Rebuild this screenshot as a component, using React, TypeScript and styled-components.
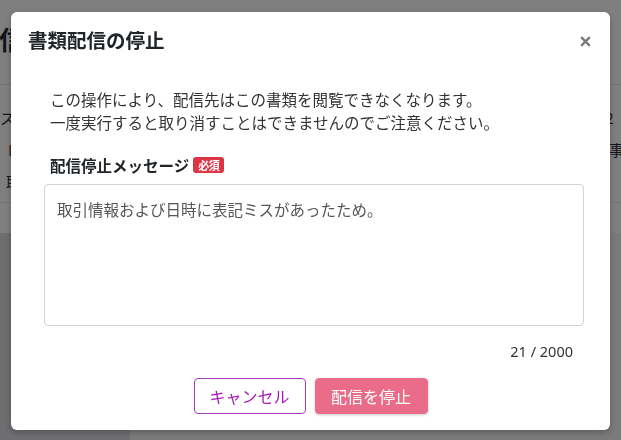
import React from "react";
import styled, { createGlobalStyle } from "styled-components";

const Global = createGlobalStyle`
  html, body { margin: 0; padding: 0; overflow: hidden; }
  body {
    width: 621px;
    height: 440px;
    font-family: "Noto Sans", "Noto Sans CJK JP", sans-serif;
    color: #212529;
    background: #ffffff;
  }
  * { box-sizing: border-box; }
`;

/* ---------- background page ---------- */
const Page = styled.div`
  width: 621px;
  height: 440px;
  display: flex;
  flex-direction: column;
  overflow: hidden;
  background: #fff;
`;

const PageHeader = styled.header`
  height: 85px;
  flex: none;
  display: flex;
  align-items: center;
  border-bottom: 1px solid #e6e6e6;
  padding-bottom: 8px;
`;

const PageTitle = styled.h1`
  margin: 0 0 0 -1px;
  font-size: 26px;
  font-weight: 700;
  color: #1f2a36;
  font-family: "Noto Sans CJK JP", sans-serif;
`;

const Table = styled.div`
  height: 118px;
  flex: none;
  display: flex;
  flex-direction: column;
  padding-top: 16px;
  border-bottom: 1px solid #e6e6e6;
`;

const TableRow = styled.div`
  height: 32px;
  display: grid;
  grid-template-columns: 597px 24px;
  align-items: center;
  font-size: 15px;
  font-family: "Noto Sans CJK JP", sans-serif;
  white-space: nowrap;
  overflow: hidden;
`;

const Cell = styled.span<{ $indent?: number; $tone?: string }>`
  padding-left: ${(p) => p.$indent ?? 0}px;
  color: ${(p) => p.$tone ?? "#1f2a36"};
  overflow: hidden;
`;

const WhiteBand = styled.div`
  height: 30px;
  flex: none;
`;

const Lower = styled.div`
  flex: 1;
  display: flex;
`;

const SideArea = styled.div`
  width: 130px;
  background: #dcdce2;
`;

const MainArea = styled.div`
  flex: 1;
  background: #f4f4f6;
`;

/* ---------- modal ---------- */
const Overlay = styled.div`
  position: fixed;
  inset: 0;
  background: rgba(0, 0, 0, 0.5);
  display: flex;
  justify-content: center;
  align-items: flex-start;
`;

const Modal = styled.div`
  margin-top: 12px;
  width: 599px;
  height: 418px;
  background: #fff;
  border-radius: 6px;
  box-shadow: 0 2px 6px rgba(0, 0, 0, 0.25);
  display: flex;
  flex-direction: column;
`;

const ModalHeader = styled.div`
  display: flex;
  align-items: center;
  justify-content: space-between;
  padding: 14px 19px 0 17px;
`;

const Title = styled.h2`
  margin: 0;
  font-size: 19.5px;
  line-height: 28px;
  font-weight: 700;
  color: #212529;
  font-family: "Noto Sans CJK JP", sans-serif;
`;

const CloseButton = styled.button`
  border: 0;
  background: none;
  padding: 0;
  width: 11px;
  height: 11px;
  margin-top: 3px;
  display: flex;
  cursor: pointer;
`;

const ModalBody = styled.div`
  padding: 34px 27px 0 33px;
  display: flex;
  flex-direction: column;
`;

const Description = styled.p`
  margin: 0;
  padding-left: 6px;
  font-size: 15.5px;
  line-height: 23px;
  color: #333;
  font-family: "Noto Sans CJK JP", sans-serif;
`;

const LabelRow = styled.div`
  margin-top: 21px;
  padding-left: 6px;
  display: flex;
  align-items: center;
  gap: 4px;
  height: 20px;
`;

const Label = styled.label`
  font-size: 15.5px;
  font-weight: 700;
  color: #212529;
  font-family: "Noto Sans CJK JP", sans-serif;
`;

const Badge = styled.span`
  display: inline-flex;
  align-items: center;
  justify-content: center;
  height: 16px;
  padding: 0 5px;
  border-radius: 3px;
  background: #dc3545;
  color: #fff;
  font-size: 11px;
  font-weight: 700;
  font-family: "Noto Sans CJK JP", sans-serif;
  letter-spacing: -0.5px;
`;

const TextArea = styled.textarea`
  margin-top: 9px;
  width: 540px;
  height: 142px;
  resize: none;
  border: 1px solid #d2d2d8;
  border-radius: 4px;
  padding: 13px 12px;
  font-size: 15.5px;
  line-height: 22px;
  color: #555;
  font-family: "Noto Sans CJK JP", sans-serif;
  outline: none;
`;

const Counter = styled.div`
  margin-top: 15px;
  padding-right: 10px;
  text-align: right;
  font-size: 14.5px;
  line-height: 20px;
  color: #333;
`;

const Actions = styled.div`
  margin-top: 17px;
  display: flex;
  justify-content: center;
  gap: 9px;
`;

const Button = styled.button<{ $variant: "outline" | "danger" }>`
  height: 36px;
  padding: 0 12px;
  border-radius: 4px;
  font-size: 16px;
  font-family: "Noto Sans CJK JP", sans-serif;
  cursor: pointer;
  border: 1px solid ${(p) => (p.$variant === "outline" ? "#a53cb9" : "#ea6c88")};
  background: ${(p) => (p.$variant === "outline" ? "#fff" : "#ea6c88")};
  color: ${(p) => (p.$variant === "outline" ? "#a21caf" : "#fff")};
  box-shadow: ${(p) => (p.$variant === "danger" ? "0 1px 3px rgba(0,0,0,0.2)" : "none")};
  width: ${(p) => (p.$variant === "outline" ? "112px" : "113px")};
`;

export default function App() {
  return (
    <>
      <Global />
      <Page>
        <PageHeader>
          <PageTitle>信</PageTitle>
        </PageHeader>
        <Table>
          <TableRow>
            <Cell>ス</Cell>
            <Cell>02</Cell>
          </TableRow>
          <TableRow>
            <Cell $indent={8} $tone="#6b4a2a">D</Cell>
            <Cell $indent={12}>事</Cell>
          </TableRow>
          <TableRow>
            <Cell $indent={6}>取引</Cell>
            <Cell />
          </TableRow>
        </Table>
        <WhiteBand />
        <Lower>
          <SideArea />
          <MainArea />
        </Lower>
      </Page>
      <Overlay>
        <Modal role="dialog" aria-modal="true">
          <ModalHeader>
            <Title>書類配信の停止</Title>
            <CloseButton aria-label="閉じる">
              <svg width="11" height="11" viewBox="0 0 11 11">
                <path d="M1.2 1.2 L9.8 9.8 M9.8 1.2 L1.2 9.8" stroke="#7a7a7a" strokeWidth="2.4" strokeLinecap="butt" />
              </svg>
            </CloseButton>
          </ModalHeader>
          <ModalBody>
            <Description>
              この操作により、配信先はこの書類を閲覧できなくなります。
              <br />
              一度実行すると取り消すことはできませんのでご注意ください。
            </Description>
            <LabelRow>
              <Label htmlFor="stop-message">配信停止メッセージ</Label>
              <Badge>必須</Badge>
            </LabelRow>
            <TextArea
              id="stop-message"
              defaultValue="取引情報および日時に表記ミスがあったため。"
            />
            <Counter>21 / 2000</Counter>
          </ModalBody>
          <Actions>
            <Button $variant="outline">キャンセル</Button>
            <Button $variant="danger">配信を停止</Button>
          </Actions>
        </Modal>
      </Overlay>
    </>
  );
}
